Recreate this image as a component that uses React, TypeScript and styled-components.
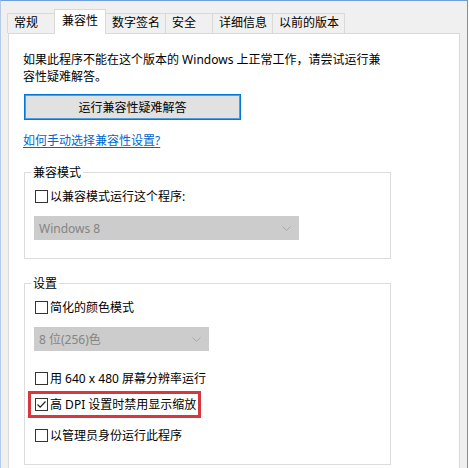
import React from "react";
import styled, { createGlobalStyle } from "styled-components";

const GlobalStyle = createGlobalStyle`
  html, body {
    margin: 0;
    padding: 0;
    background: #fff;
  }
  body {
    font-family: "Noto Sans", "Noto Sans CJK SC", "Liberation Sans", sans-serif;
    font-size: 12px;
    color: #111;
  }
`;

const Window = styled.div`
  box-sizing: border-box;
  width: 468px;
  height: 468px;
  overflow: hidden;
  background: #f0f0f0;
  border-top: 1px solid #6d9fdc;
  border-left: 1px solid #b3cbe8;
  border-right: 1px solid #5e97dc;
  padding-top: 8px;
`;

const TabStrip = styled.div`
  position: relative;
  z-index: 1;
  display: flex;
  align-items: flex-end;
  height: 25px;
  padding-left: 6px;
`;

const Tab = styled.div<{ $active?: boolean }>`
  box-sizing: border-box;
  min-width: ${(p) => (p.$active ? 51 : 48)}px;
  height: ${(p) => (p.$active ? 25 : 20)}px;
  margin-bottom: ${(p) => (p.$active ? 0 : 1)}px;
  margin-left: -1px;
  padding: ${(p) => (p.$active ? "2px 7px 0" : "0 5px 0 6px")};
  border: 1px solid #d9d9d9;
  border-bottom: none;
  background: ${(p) => (p.$active ? "#fff" : "#f0f0f0")};
  line-height: 18px;
  white-space: nowrap;
  color: #000;

  &:first-child {
    margin-left: 0;
  }
`;

const Panel = styled.div`
  position: relative;
  box-sizing: border-box;
  display: flex;
  flex-direction: column;
  align-items: flex-start;
  width: 452px;
  height: 460px;
  margin: -1px 0 0 7px;
  padding: 17px 0 0 14px;
  background: #fff;
  border: 1px solid #d9d9d9;
`;

const Intro = styled.p`
  margin: 0;
  line-height: 17px;
  white-space: nowrap;
  color: #000;
`;

const TroubleButton = styled.button`
  box-sizing: border-box;
  width: 217px;
  height: 26px;
  margin: 9px 0 0 1px;
  padding: 0;
  border: 1px solid #0078d7;
  box-shadow: inset 0 0 0 1px #4f9ce2;
  background: #e1e1e1;
  font: inherit;
  color: #000;
  line-height: 17px;
`;

const HelpLink = styled.a`
  margin-top: 12px;
  line-height: 17px;
  color: #0066cc;
  text-decoration: underline;
  text-underline-offset: 2px;
`;

const Group = styled.fieldset<{ $gap: number; $bottom: number }>`
  box-sizing: border-box;
  display: flex;
  flex-direction: column;
  align-items: flex-start;
  width: 367px;
  min-width: 0;
  margin: ${(p) => p.$gap}px 0 0 1px;
  padding: 7px 0 ${(p) => p.$bottom}px 10px;
  border: 1px solid #dcdcdc;
`;

const Legend = styled.legend`
  margin-left: -4px;
  padding: 0 2px;
  line-height: 17px;
  color: #000;
`;

const Row = styled.div<{ $gap?: number }>`
  display: flex;
  align-items: center;
  gap: 2px;
  height: 17px;
  margin-top: ${(p) => p.$gap ?? 0}px;
  line-height: 17px;
  white-space: nowrap;
  color: #000;
`;

const Box = styled.span`
  box-sizing: border-box;
  display: flex;
  align-items: center;
  justify-content: center;
  width: 13px;
  height: 13px;
  border: 1px solid #333;
  background: #fff;
`;

const Highlight = styled.div`
  margin: 4px 0 0 -7px;
  padding: 2px 2px 2px 4px;
  border: 3px solid #d7373e;
`;

const Select = styled.div<{ $width: number }>`
  box-sizing: border-box;
  display: flex;
  align-items: center;
  justify-content: space-between;
  width: ${(p) => p.$width}px;
  height: 24px;
  margin-top: 11px;
  margin-left: -1px;
  padding: 0 8px 0 5px;
  background: #cccccc;
  color: #858585;
  font-size: 12px;
`;

const Check = ({ checked }: { checked?: boolean }) => (
  <Box>
    {checked && (
      <svg width="11" height="11" viewBox="0 0 11 11">
        <path d="M1.5 5.5 L4.2 8.2 L9.5 2.5" fill="none" stroke="#222" strokeWidth="1.2" />
      </svg>
    )}
  </Box>
);

const Chevron = () => (
  <svg width="9" height="5" viewBox="0 0 9 5">
    <path d="M0.5 0.5 L4.5 4.5 L8.5 0.5" fill="none" stroke="#a8a8a8" strokeWidth="1" />
  </svg>
);

const tabs = ["常规", "兼容性", "数字签名", "安全", "详细信息", "以前的版本"];

export default function App() {
  return (
    <>
      <GlobalStyle />
      <Window>
        <TabStrip>
          {tabs.map((t) => (
            <Tab key={t} $active={t === "兼容性"}>
              {t}
            </Tab>
          ))}
        </TabStrip>
        <Panel>
          <Intro>
            如果此程序不能在这个版本的 Windows 上正常工作，请尝试运行兼
            <br />
            容性疑难解答。
          </Intro>
          <TroubleButton>运行兼容性疑难解答</TroubleButton>
          <HelpLink>如何手动选择兼容性设置?</HelpLink>

          <Group $gap={15} $bottom={18}>
            <Legend>兼容模式</Legend>
            <Row>
              <Check />
              以兼容模式运行这个程序:
            </Row>
            <Select $width={265}>
              Windows 8
              <Chevron />
            </Select>
          </Group>

          <Group $gap={16} $bottom={20}>
            <Legend>设置</Legend>
            <Row>
              <Check />
              简化的颜色模式
            </Row>
            <Select $width={175}>
              8 位(256)色
              <Chevron />
            </Select>
            <Row $gap={19}>
              <Check />用 640 x 480 屏幕分辨率运行
            </Row>
            <Highlight>
              <Row>
                <Check checked />高 DPI 设置时禁用显示缩放
              </Row>
            </Highlight>
            <Row $gap={9}>
              <Check />
              以管理员身份运行此程序
            </Row>
          </Group>
        </Panel>
      </Window>
    </>
  );
}
